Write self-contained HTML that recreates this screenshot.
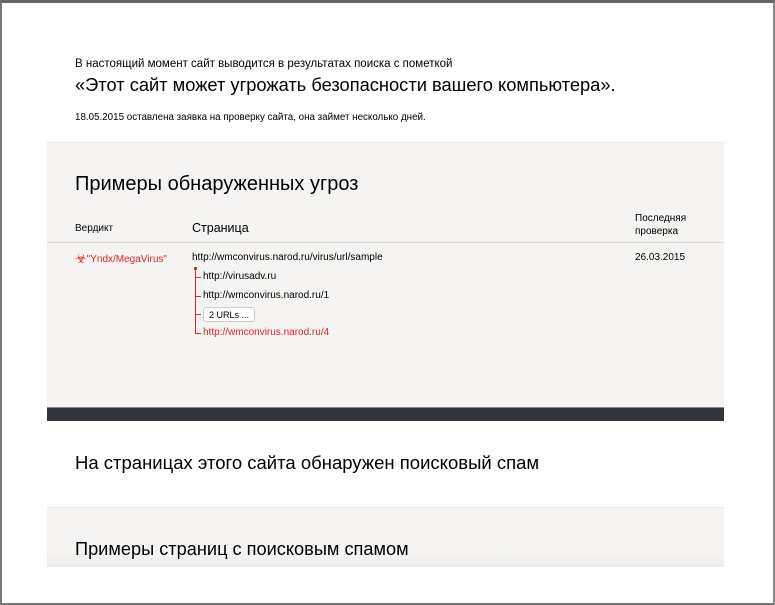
<!DOCTYPE html>
<html><head><meta charset="utf-8"><style>
*{margin:0;padding:0;box-sizing:border-box}
html,body{width:775px;height:605px;overflow:hidden;background:#fff}
body{font-family:"Liberation Sans",sans-serif;color:#000;position:relative}
.frame{position:absolute;left:0;top:0;width:775px;height:605px;border:2px solid #777;border-right-color:#888;border-top-width:3px;border-top-color:#666;pointer-events:none;z-index:5}
.a{position:absolute;white-space:nowrap}
.panel{position:absolute;left:47px;width:677px;background:#f5f4f2}
.tree{position:absolute;left:195px;top:269px;width:1px;height:65px;background:#e0261e}
.tk{position:absolute;left:195px;width:6px;height:1px;background:#e0261e}
</style></head><body>
<div class="frame"></div>
<div class="a" style="left:75px;top:58px;font-size:11.5px">В настоящий момент сайт выводится в результатах поиска с пометкой</div>
<div class="a" style="left:75px;top:74px;font-size:18.3px">«Этот сайт может угрожать безопасности вашего компьютера».</div>
<div class="a" style="left:75px;top:112px;font-size:9.8px">18.05.2015 оставлена заявка на проверку сайта, она займет несколько дней.</div>

<div class="panel" style="top:142px;height:265px;border-top:1px solid #ebeae8"></div>
<div class="a" style="left:75px;top:173px;font-size:20px">Примеры обнаруженных угроз</div>
<div class="a" style="left:75px;top:223px;font-size:10px">Вердикт</div>
<div class="a" style="left:192px;top:221px;font-size:12.5px">Страница</div>
<div class="a" style="left:635px;top:212px;font-size:10px;line-height:13px">Последняя<br>проверка</div>
<div class="a" style="left:47px;top:242px;width:677px;height:1px;background:#d8d7d5"></div>
<div class="a" style="left:75px;top:251px;font-size:10px;color:#e0261e"><span style="font-size:13px;vertical-align:-1px">☣</span>"Yndx/MegaVirus"</div>
<div class="a" style="left:192px;top:252px;font-size:10px">http://wmconvirus.narod.ru/virus/url/sample</div>
<div class="a" style="left:635px;top:252px;font-size:10px">26.03.2015</div>
<div class="tree"></div>
<div class="a" style="left:194px;top:267px;width:3px;height:3px;background:#e0261e"></div>
<div class="tk" style="top:277px"></div>
<div class="tk" style="top:296px"></div>
<div class="tk" style="top:314px"></div>
<div class="tk" style="top:333px"></div>
<div class="a" style="left:203px;top:271px;font-size:10px">http://virusadv.ru</div>
<div class="a" style="left:203px;top:290px;font-size:10px">http://wmconvirus.narod.ru/1</div>
<div class="a" style="left:203px;top:307px;font-size:9px;background:#fff;border:1px solid #ccc;border-radius:3px;padding:2px 5px 1px">2 URLs ...</div>
<div class="a" style="left:203px;top:327px;font-size:10px;color:#e0261e">http://wmconvirus.narod.ru/4</div>

<div class="a" style="left:47px;top:407px;width:677px;height:14px;background:#32363b;border-top:1px solid #888"></div>
<div class="a" style="left:75px;top:452px;font-size:18.5px">На страницах этого сайта обнаружен поисковый спам</div>
<div class="panel" style="top:507px;height:60px;border-top:1px solid #ebeae8;background:linear-gradient(#f5f4f2 80%,#ecebea)"></div>
<div class="a" style="left:75px;top:539px;font-size:18.2px">Примеры страниц с поисковым спамом</div>
</body></html>
